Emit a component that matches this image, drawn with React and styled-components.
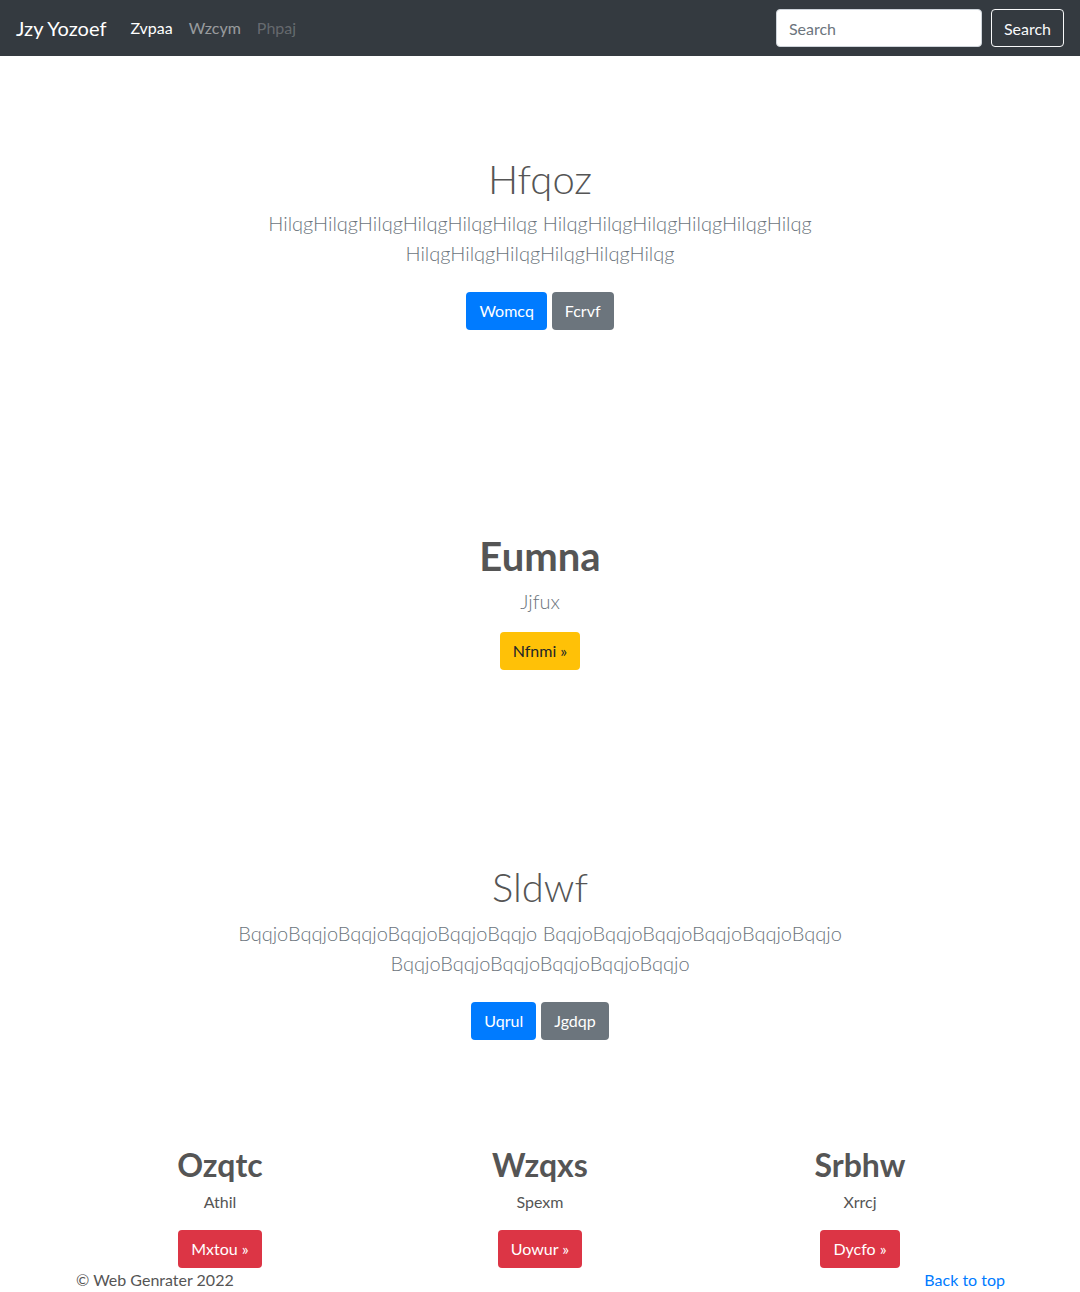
import React from 'react';
import styled, {createGlobalStyle} from 'styled-components';

const GlobalStyle = createGlobalStyle`
  * {
    box-sizing: border-box;
  }
  body {
    margin: 0;
    background: #fff;
    font-family: Lato, 'Open Sans', sans-serif;
    font-size: 16px;
    line-height: 1.5;
    color: #212529;
  }
`;

const variants = {
  primary: {bg: '#007bff', fg: '#fff'},
  secondary: {bg: '#6c757d', fg: '#fff'},
  warning: {bg: '#ffc107', fg: '#212529'},
  danger: {bg: '#dc3545', fg: '#fff'},
};

const Navbar = styled.nav`
  height: 56px;
  background: #343a40;
  display: flex;
  align-items: center;
  padding: 0 16px;
`;

const Brand = styled.a`
  font-size: 20px;
  color: #fff;
  margin-right: 24px;
`;

const NavLinks = styled.div`
  display: flex;
  gap: 16px;
  flex: 1;
`;

const NavLink = styled.a`
  font-size: 16px;
  color: ${p => (p.$active ? '#fff' : p.$disabled ? 'rgba(255,255,255,.25)' : 'rgba(255,255,255,.5)')};
`;

const SearchForm = styled.form`
  display: flex;
  gap: 9px;
  align-items: center;
`;

const SearchInput = styled.input`
  width: 206px;
  height: 38px;
  border: 1px solid #ced4da;
  border-radius: 4px;
  padding: 6px 12px;
  font-family: inherit;
  font-size: 16px;
  color: #495057;
  &::placeholder {
    color: #6c757d;
  }
`;

const OutlineButton = styled.button`
  height: 38px;
  padding: 6px 12px;
  border: 1px solid #f8f9fa;
  border-radius: 4px;
  background: transparent;
  color: #f8f9fa;
  font-family: inherit;
  font-size: 16px;
`;

const Section = styled.section`
  display: flex;
  flex-direction: column;
  align-items: center;
  text-align: center;
  padding-top: ${p => p.$top}px;
`;

const Heading = styled.h1`
  margin: 0;
  font-size: 40px;
  line-height: 48px;
  font-weight: ${p => (p.$bold ? 700 : 300)};
  color: #555;
`;

const Lead = styled.p`
  margin: ${p => p.$mt}px 0 ${p => p.$mb}px;
  max-width: 700px;
  font-size: 20px;
  line-height: 30px;
  font-weight: 300;
  color: #6c757d;
`;

const ButtonRow = styled.div`
  display: flex;
  gap: 5px;
  justify-content: center;
`;

const Button = styled.a`
  display: inline-block;
  height: 38px;
  padding: 6px 13px;
  border-radius: 4px;
  font-size: 16px;
  line-height: 26px;
  background: ${p => variants[p.$variant].bg};
  color: ${p => variants[p.$variant].fg};
`;

const Columns = styled.div`
  width: 960px;
  margin: 0 auto;
  padding-top: 106px;
  display: grid;
  grid-template-columns: repeat(3, 1fr);
`;

const Column = styled.div`
  display: flex;
  flex-direction: column;
  align-items: center;
`;

const ColTitle = styled.h2`
  margin: 0;
  font-size: 32px;
  line-height: 38px;
  font-weight: 700;
  color: #555;
`;

const ColText = styled.p`
  margin: 6px 0 16px;
  font-size: 16px;
  line-height: 24px;
  color: #555;
`;

const Footer = styled.footer`
  width: 960px;
  margin: 0 auto;
  padding: 0 15px 0 16px;
  display: flex;
  justify-content: space-between;
  line-height: 24px;
  color: #555;
`;

const TopLink = styled.a`
  color: #007bff;
`;

const columns = [
  {title: 'Ozqtc', text: 'Athil', action: 'Mxtou'},
  {title: 'Wzqxs', text: 'Spexm', action: 'Uowur'},
  {title: 'Srbhw', text: 'Xrrcj', action: 'Dycfo'},
];

export default function App() {
  return (
    <>
      <GlobalStyle />
      <Navbar>
        <Brand>Jzy Yozoef</Brand>
        <NavLinks>
          <NavLink $active>Zvpaa</NavLink>
          <NavLink>Wzcym</NavLink>
          <NavLink $disabled>Phpaj</NavLink>
        </NavLinks>
        <SearchForm onSubmit={e => e.preventDefault()}>
          <SearchInput placeholder="Search" />
          <OutlineButton type="submit">Search</OutlineButton>
        </SearchForm>
      </Navbar>

      <Section $top={99}>
        <Heading>Hfqoz</Heading>
        <Lead $mt={5} $mb={24}>
          HilqgHilqgHilqgHilqgHilqgHilqg HilqgHilqgHilqgHilqgHilqgHilqg HilqgHilqgHilqgHilqgHilqgHilqg
        </Lead>
        <ButtonRow>
          <Button $variant="primary">Womcq</Button>
          <Button $variant="secondary">Fcrvf</Button>
        </ButtonRow>
      </Section>

      <Section $top={202}>
        <Heading $bold>Eumna</Heading>
        <Lead $mt={6} $mb={16}>
          Jjfux
        </Lead>
        <Button $variant="warning">Nfnmi »</Button>
      </Section>

      <Section $top={193}>
        <Heading>Sldwf</Heading>
        <Lead $mt={7} $mb={24}>
          BqqjoBqqjoBqqjoBqqjoBqqjoBqqjo BqqjoBqqjoBqqjoBqqjoBqqjoBqqjo BqqjoBqqjoBqqjoBqqjoBqqjoBqqjo
        </Lead>
        <ButtonRow>
          <Button $variant="primary">Uqrul</Button>
          <Button $variant="secondary">Jgdqp</Button>
        </ButtonRow>
      </Section>

      <Columns>
        {columns.map(c => (
          <Column key={c.title}>
            <ColTitle>{c.title}</ColTitle>
            <ColText>{c.text}</ColText>
            <Button $variant="danger">{c.action} »</Button>
          </Column>
        ))}
      </Columns>

      <Footer>
        <span>© Web Genrater 2022</span>
        <TopLink>Back to top</TopLink>
      </Footer>
    </>
  );
}
